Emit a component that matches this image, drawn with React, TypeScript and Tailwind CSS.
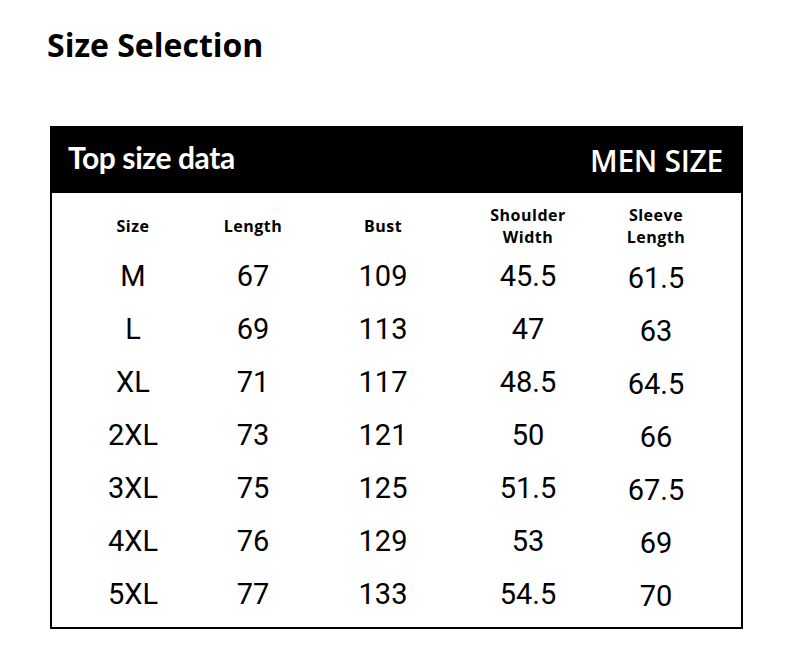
import React from "react";

type Row = {
  size: string;
  length: string;
  bust: string;
  shoulder: string;
  sleeve: string;
};

const rows: Row[] = [
  { size: "M", length: "67", bust: "109", shoulder: "45.5", sleeve: "61.5" },
  { size: "L", length: "69", bust: "113", shoulder: "47", sleeve: "63" },
  { size: "XL", length: "71", bust: "117", shoulder: "48.5", sleeve: "64.5" },
  { size: "2XL", length: "73", bust: "121", shoulder: "50", sleeve: "66" },
  { size: "3XL", length: "75", bust: "125", shoulder: "51.5", sleeve: "67.5" },
  { size: "4XL", length: "76", bust: "129", shoulder: "53", sleeve: "69" },
  { size: "5XL", length: "77", bust: "133", shoulder: "54.5", sleeve: "70" },
];

const cols = "grid grid-cols-[162px_78px_182px_108px_148px]";

const App: React.FC = () => {
  return (
    <div className="w-[790px] h-[651px] bg-white text-black overflow-hidden">
      {/* Title */}
      <h1 className="pl-[47px] pt-[25px] text-[32px] leading-[40px] font-bold font-['Open_Sans',sans-serif]">
        Size Selection
      </h1>

      {/* Size table */}
      <div className="ml-[50px] mt-[61px] w-[693px] border-2 border-black">
        <div className="h-[65px] bg-black text-white flex items-center justify-between pl-[16px] pr-[18px]">
          <span className="text-[30px] font-bold font-['Lato',sans-serif] tracking-[-0.4px] pb-[6px]">
            Top size data
          </span>
          <span className="text-[30px] font-semibold font-['Open_Sans',sans-serif] tracking-[-0.3px]">
            MEN SIZE
          </span>
        </div>

        {/* Column headers */}
        <div className={`${cols} h-[57px] pt-2 items-center text-center text-[16px] leading-[22px] font-bold font-['Open_Sans',sans-serif] tracking-[0.5px]`}>
          <div>Size</div>
          <div>Length</div>
          <div>Bust</div>
          <div>
            <div>Shoulder</div>
            <div>Width</div>
          </div>
          <div>
            <div>Sleeve</div>
            <div>Length</div>
          </div>
        </div>

        {/* Data rows */}
        <div className="pb-[6px] font-['Roboto',sans-serif] text-[29px] text-center">
          {rows.map((r) => (
            <div key={r.size} className={`${cols} h-[53px] items-center`}>
              <div>{r.size}</div>
              <div>{r.length}</div>
              <div>{r.bust}</div>
              <div>{r.shoulder}</div>
              <div className="pt-1">{r.sleeve}</div>
            </div>
          ))}
        </div>
      </div>
    </div>
  );
};

export default App;
